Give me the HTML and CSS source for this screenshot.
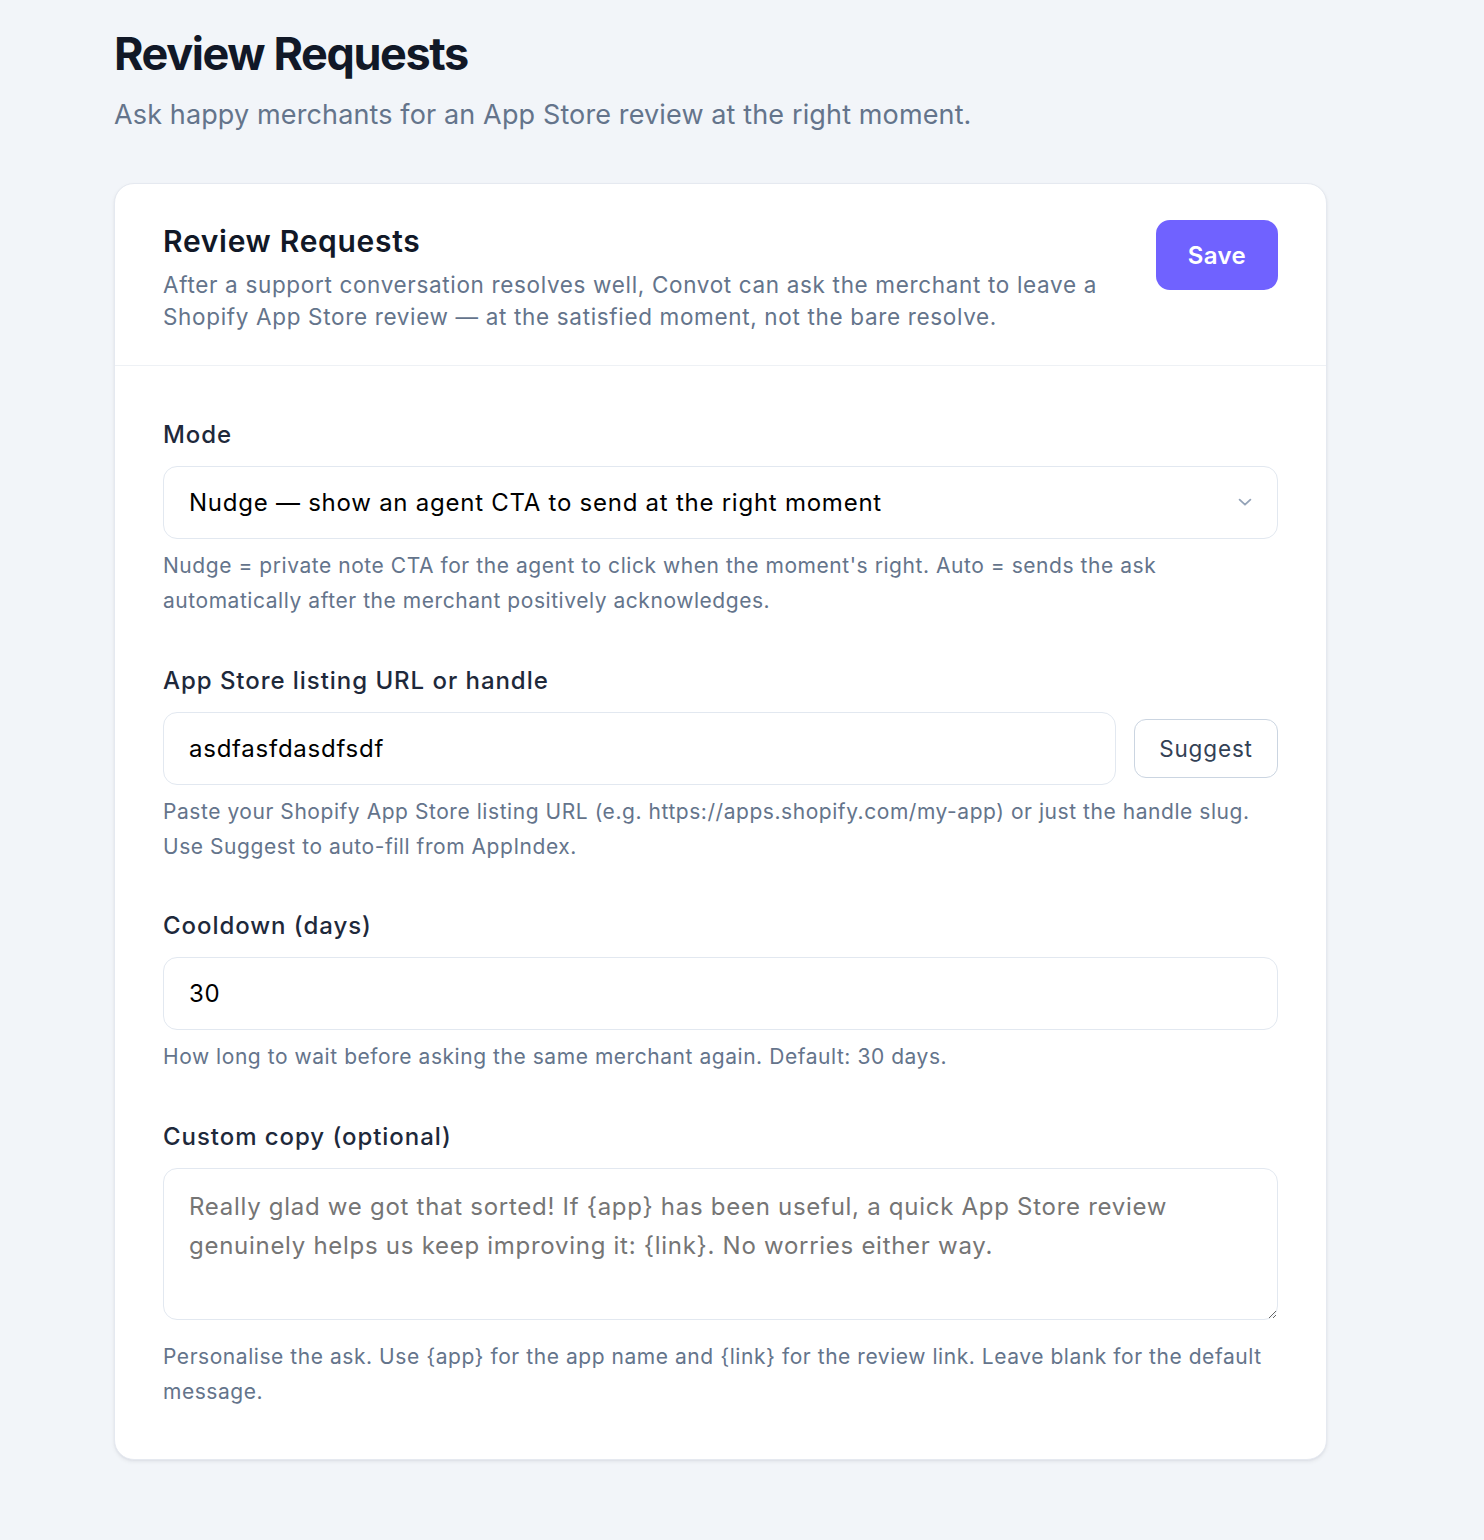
FILE: index.html
```html
<!DOCTYPE html>
<html lang="en">
<head>
<meta charset="utf-8">
<title>Review Requests</title>
<link rel="stylesheet" href="styles.css">
</head>
<body>
<main class="page">
  <header class="page-head">
    <h1 class="page-title">Review Requests</h1>
    <p class="page-sub">Ask happy merchants for an App Store review at the right moment.</p>
  </header>

  <section class="card">
    <div class="card-head">
      <div class="card-head-text">
        <h2 class="card-title">Review Requests</h2>
        <p class="card-desc">After a support conversation resolves well, Convot can ask the merchant to leave a Shopify App Store review — at the satisfied moment, not the bare resolve.</p>
      </div>
      <button class="btn-primary" type="button">Save</button>
    </div>

    <div class="card-body">
      <div class="field">
        <label class="label" for="mode">Mode</label>
        <div class="select-wrap">
          <select id="mode" class="control select">
            <option>Nudge — show an agent CTA to send at the right moment</option>
            <option>Auto — send the ask automatically</option>
          </select>
          <svg class="chevron" width="24" height="24" viewBox="0 0 20 20" fill="none"><path d="M5.5 8 10 12.25 14.5 8" stroke="#94a3b8" stroke-width="1.5" stroke-linecap="round" stroke-linejoin="round"/></svg>
        </div>
        <p class="help">Nudge = private note CTA for the agent to click when the moment's right. Auto = sends the ask automatically after the merchant positively acknowledges.</p>
      </div>

      <div class="field">
        <label class="label" for="url">App Store listing URL or handle</label>
        <div class="row">
          <input id="url" class="control grow" type="text" value="asdfasfdasdfsdf">
          <button class="btn-secondary" type="button">Suggest</button>
        </div>
        <p class="help">Paste your Shopify App Store listing URL (e.g. https://apps.shopify.com/my-app) or just the handle slug. Use Suggest to auto-fill from AppIndex.</p>
      </div>

      <div class="field">
        <label class="label" for="cool">Cooldown (days)</label>
        <input id="cool" class="control" type="text" value="30">
        <p class="help">How long to wait before asking the same merchant again. Default: 30 days.</p>
      </div>

      <div class="field">
        <label class="label" for="copy">Custom copy (optional)</label>
        <textarea id="copy" class="control textarea" placeholder="Really glad we got that sorted! If {app} has been useful, a quick App Store review genuinely helps us keep improving it: {link}. No worries either way."></textarea>
        <p class="help help-ta">Personalise the ask. Use {app} for the app name and {link} for the review link. Leave blank for the default message.</p>
      </div>
    </div>
  </section>
</main>
</body>
</html>
```
FILE: styles.css
```css
* { box-sizing: border-box; }

html, body {
  margin: 0;
  padding: 0;
}

body {
  background: #f2f5f9;
  font-family: Inter, "Noto Sans", "Liberation Sans", sans-serif;
  color: #0f172a;
  min-height: 1540px;
}

.page {
  width: 1213px;
  margin-left: 114px;
  padding-top: 24px;
  padding-bottom: 78px;
}

.page-head {
  margin-bottom: 49px;
}

.page-title {
  margin: 0;
  font-size: 45px;
  line-height: 60px;
  font-weight: 700;
  letter-spacing: -1.4px;
  color: #111827;
}

.page-sub {
  margin: 12px 0 0;
  font-size: 27px;
  line-height: 38px;
  letter-spacing: 0.13px;
  color: #64748b;
}

.card {
  background: #fff;
  border: 1px solid #e5e9f0;
  border-radius: 20px;
  box-shadow: 0 2px 4px rgba(15, 23, 42, 0.06), 0 1px 2px rgba(15, 23, 42, 0.04);
}

.card-head {
  display: flex;
  justify-content: space-between;
  align-items: flex-start;
  gap: 40px;
  padding: 36px 48px 32px 48px;
  border-bottom: 1px solid #eef1f5;
}

.card-title {
  margin: 0;
  font-size: 30px;
  line-height: 42px;
  font-weight: 600;
  letter-spacing: 0.7px;
  color: #111827;
}

.card-desc {
  margin: 7px 0 0;
  font-size: 22.5px;
  line-height: 32px;
  letter-spacing: 0.66px;
  color: #64748b;
  max-width: 950px;
}

.btn-primary {
  flex: none;
  width: 122px;
  height: 70px;
  border: 0;
  border-radius: 14px;
  background: #7062ff;
  color: #fff;
  font-family: inherit;
  font-size: 24px;
  font-weight: 600;
  letter-spacing: 0.4px;
}

.card-body {
  padding: 51px 48px 50px 48px;
  display: flex;
  flex-direction: column;
  gap: 44.5px;
}

.field {
  display: flex;
  flex-direction: column;
}

.label {
  font-size: 24px;
  line-height: 36px;
  font-weight: 500;
  letter-spacing: 0.95px;
  color: #1e293b;
  margin-bottom: 13px;
}

.control {
  display: block;
  width: 100%;
  height: 73px;
  border: 1.5px solid #e2e8f0;
  border-radius: 14px;
  background: #fff;
  padding: 0 25px;
  font-family: inherit;
  font-size: 24px;
  letter-spacing: 0.75px;
  color: #000;
  outline: none;
}

.select-wrap {
  position: relative;
}

.select {
  appearance: none;
  -webkit-appearance: none;
}

.chevron {
  position: absolute;
  right: 21px;
  top: 24px;
  pointer-events: none;
}

.row {
  display: flex;
  align-items: center;
  gap: 18px;
}

.grow {
  flex: 1;
  width: auto;
}

.btn-secondary {
  flex: none;
  width: 144px;
  height: 59px;
  border: 1.5px solid #cbd5e1;
  border-radius: 12px;
  background: #fff;
  color: #334155;
  font-family: inherit;
  font-size: 22.5px;
  letter-spacing: 0.85px;
}

.help {
  margin: 9px 0 0;
  font-size: 21px;
  line-height: 35px;
  letter-spacing: 0.55px;
  color: #64748b;
}

.textarea {
  height: 152px;
  padding: 18px 25px;
  line-height: 39px;
  letter-spacing: 0.72px;
  resize: vertical;
}

.textarea::placeholder {
  color: #757575;
}

.help-ta {
  margin-top: 19px;
}
```
